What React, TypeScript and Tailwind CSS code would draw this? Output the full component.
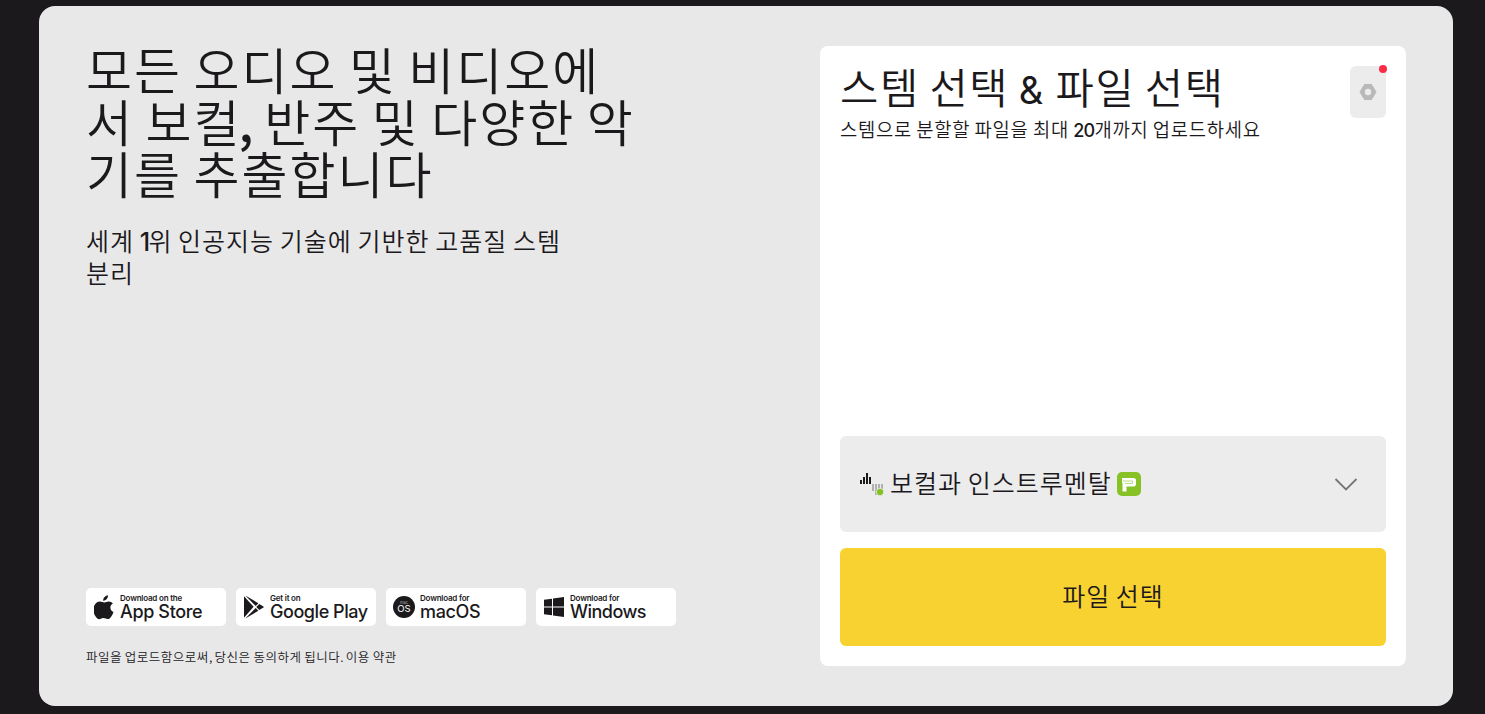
import React from 'react';

type StoreBadgeProps = {
  caption: string;
  name: string;
  nameClass: string;
  icon: React.ReactNode;
};

const latin = "font-['Inter']";
const hangul = 'tracking-[0.04em] [word-spacing:-0.034em] whitespace-nowrap';

function AppleIcon() {
  return (
    <svg width="20" height="25" viewBox="0 0 20 25" fill="#1b191c">
      <path d="M13.9 0.2c.2 1.500-.4 2.900-1.200 3.900-.9 1-2.200 1.800-3.500 1.700-.2-1.400.5-2.800 1.300-3.700C11.400 1.100 12.800.3 13.900.2z" />
      <path d="M18.900 8.400c-1.600 1-2.500 2.300-2.500 4.100 0 2.100 1.200 3.700 3.100 4.500-.4 1.300-1 2.600-1.900 3.900-1.100 1.600-2.200 3.200-4 3.200-1.700 0-2.200-1-4.100-1-2 0-2.600 1-4.200 1.100-1.700 0-2.900-1.700-4-3.300C-1 17.700-1 12.200.9 9.400c1.200-1.900 3.100-3 4.900-3 1.800 0 3 1 4.500 1s2.400-1 4.500-1c1.600 0 3.200.8 4.100 2z" />
    </svg>
  );
}

function PlayIcon() {
  return (
    <svg width="22" height="24" viewBox="0 0 22 24" fill="#1b191c">
      <path d="M1 1.200 10.600 11.800 1 22.800z" />
      <path d="M2.300.4 15.400 8.300 12.700 11z" />
      <path d="M2.300 23.600 15.400 15.700 12.700 13z" />
      <path d="m16.300 8.900 4.100 2.500c.5.300.5.900 0 1.200l-4.100 2.500-3-3.100z" />
    </svg>
  );
}

function MacIcon() {
  return (
    <svg width="22" height="22" viewBox="0 0 22 22">
      <circle cx="11" cy="11" r="11" fill="#1b191c" />
      <text x="11" y="7.500" fill="#aaa" fontSize="4" textAnchor="middle" fontFamily="Inter">
        mac
      </text>
      <text x="11" y="16.300" fill="#fff" fontSize="9.500" textAnchor="middle" fontFamily="Inter">
        OS
      </text>
    </svg>
  );
}

function WindowsIcon() {
  return (
    <svg width="20" height="20" viewBox="0 0 20 20" fill="#1b191c">
      <path d="M0 2.800 8 1.700V9.400H0zM9 1.500 20 0V9.400H9zM0 10.500H8V18.300L0 17.200zM9 10.500H20V20L9 18.400z" />
    </svg>
  );
}

function StoreBadge({ caption, name, nameClass, icon }: StoreBadgeProps) {
  return (
    <a href="#" className="flex h-[38px] w-[140px] items-center rounded-[5px] bg-white">
      <span className="ml-[7px] flex w-[22px] shrink-0 items-center justify-center">{icon}</span>
      <span className={`${latin} ml-[5px] flex flex-col whitespace-nowrap`}>
        <span className="text-[8px] font-semibold leading-[9px] tracking-[-0.025em]">{caption}</span>
        <span className={`text-[18px] font-[450] leading-[18px] ${nameClass}`}>{name}</span>
      </span>
    </a>
  );
}

function StemIcon() {
  return (
    <svg width="24" height="24" viewBox="0 0 24 24">
      <path d="M1 8v4M4 5v7M7 1v11M10 5v7" stroke="#1b191c" strokeWidth="2" />
      <path d="M13 12v7M16 12v11M19 12v7M22 12v5" stroke="#aaa" strokeWidth="1.800" />
      <circle cx="20" cy="20" r="3.700" fill="#82c11f" stroke="#ececec" strokeWidth=".8" />
    </svg>
  );
}

function PremiumIcon() {
  return (
    <svg width="24" height="24" viewBox="0 0 24 24">
      <rect width="24" height="24" rx="5" fill="#86c126" />
      <path d="M5 6h12.500l1.500 1.500v5.500l-1.500 1.500H9.500v5H5.500V11H5z" fill="#fff" />
      <path d="M6 9h9.500v2.500H8" fill="none" stroke="#86c126" strokeWidth=".7" opacity=".8" />
    </svg>
  );
}

export default function App() {
  return (
    <div className="h-[714px] bg-[#1b191c] pl-[39px] pt-1.5 font-['Noto_Sans_CJK_KR',sans-serif] font-normal text-[#1b191c]">
      <main className="flex h-[700px] w-[1414px] justify-between rounded-2xl bg-[#e8e8e8] px-[47px] py-10">
        <section className="flex w-[600px] flex-col pb-px">
          <h1 className={`-mt-1 text-[50px] font-[350] leading-[52px] ${hangul}`}>
            모든 오디오 및 비디오에
            <br />
            서 보<span className="tracking-[-0.02em]">컬</span>
            <span className="font-medium tracking-[-0.01em]">,</span> 반주 및 다양한 악
            <br />
            기를 추출합니다
          </h1>
          <p className={`mt-[26px] text-[25px] font-[350] leading-8 ${hangul}`}>
            세계 <span className={`${latin} leading-0 font-[450] tracking-[-0.07em]`}>1</span>위 인공지능 기술에 기반한
            고품질 스템
            <br />
            분리
          </p>
          <div className="mt-auto flex gap-2.5">
            <StoreBadge caption="Download on the" name="App Store" nameClass="tracking-[-0.02em]" icon={<AppleIcon />} />
            <StoreBadge caption="Get it on" name="Google Play" nameClass="tracking-[-0.025em]" icon={<PlayIcon />} />
            <StoreBadge caption="Download for" name="macOS" nameClass="tracking-[-0.02em]" icon={<MacIcon />} />
            <StoreBadge caption="Download for" name="Windows" nameClass="tracking-[-0.03em]" icon={<WindowsIcon />} />
          </div>
          <p className={`mt-[23px] text-[12.5px] font-[350] leading-4 ${hangul}`}>
            파일을 업로드함으로써<span className="tracking-[-0.04em]">,</span> 당신은 동의하게 됩니다
            <span className="tracking-[-0.06em]">.</span> <a href="#">이용 약관</a>
          </p>
        </section>

        <section className="flex w-[586px] flex-col rounded-lg bg-white p-5">
          <div className="flex items-start justify-between">
            <div>
              <h2 className={`-mt-0.5 text-[41.6px] font-[350] leading-[44px] ${hangul}`}>
                스템 선택{' '}
                <span className={`${latin} text-[38px] font-normal leading-0 tracking-[0.07em]`}>&amp;</span> 파일 선택
              </h2>
              <p className={`mt-[9px] text-[18.75px] font-[350] leading-6 ${hangul}`}>
                스템으로 분할할 파일을 최대{' '}
                <span className={`${latin} text-lg font-medium leading-0 tracking-[-0.04em]`}>20</span>개까지 업로드하세요
              </p>
            </div>
            <button type="button" className="relative flex h-[52px] w-9 items-center justify-center rounded-md bg-[#ececec]">
              <svg width="18" height="16" viewBox="0 0 18 16">
                <path
                  d="M5.500.5h7L17 8l-4.500 7.500h-7L1 8z"
                  fill="#b9b9b9"
                  stroke="#b9b9b9"
                  strokeLinejoin="round"
                />
                <circle cx="9" cy="8" r="3.200" fill="#ececec" />
              </svg>
              <span className="absolute -right-px -top-px size-2 rounded-full bg-[#fb2c45]" />
            </button>
          </div>

          <button type="button" className="mt-auto flex h-24 items-center rounded-md bg-[#ececec] px-5 text-[25px] font-[350]">
            <StemIcon />
            <span className={`ml-1.5 w-[222px] pb-0.5 text-left ${hangul}`}>보컬과 인스트루멘탈</span>
            <span className="ml-[5px]">
              <PremiumIcon />
            </span>
            <svg className="ml-auto mr-2" width="24" height="14" viewBox="0 0 24 14" fill="none">
              <path d="m1.500 2 10.500 10.500L22.500 2" stroke="#757575" strokeWidth="1.800" />
            </svg>
          </button>
          <button type="button" className={`mt-4 h-[98px] rounded-md bg-[#f8d231] pb-[3px] text-[25px] font-[350] ${hangul}`}>
            파일 선택
          </button>
        </section>
      </main>
    </div>
  );
}
